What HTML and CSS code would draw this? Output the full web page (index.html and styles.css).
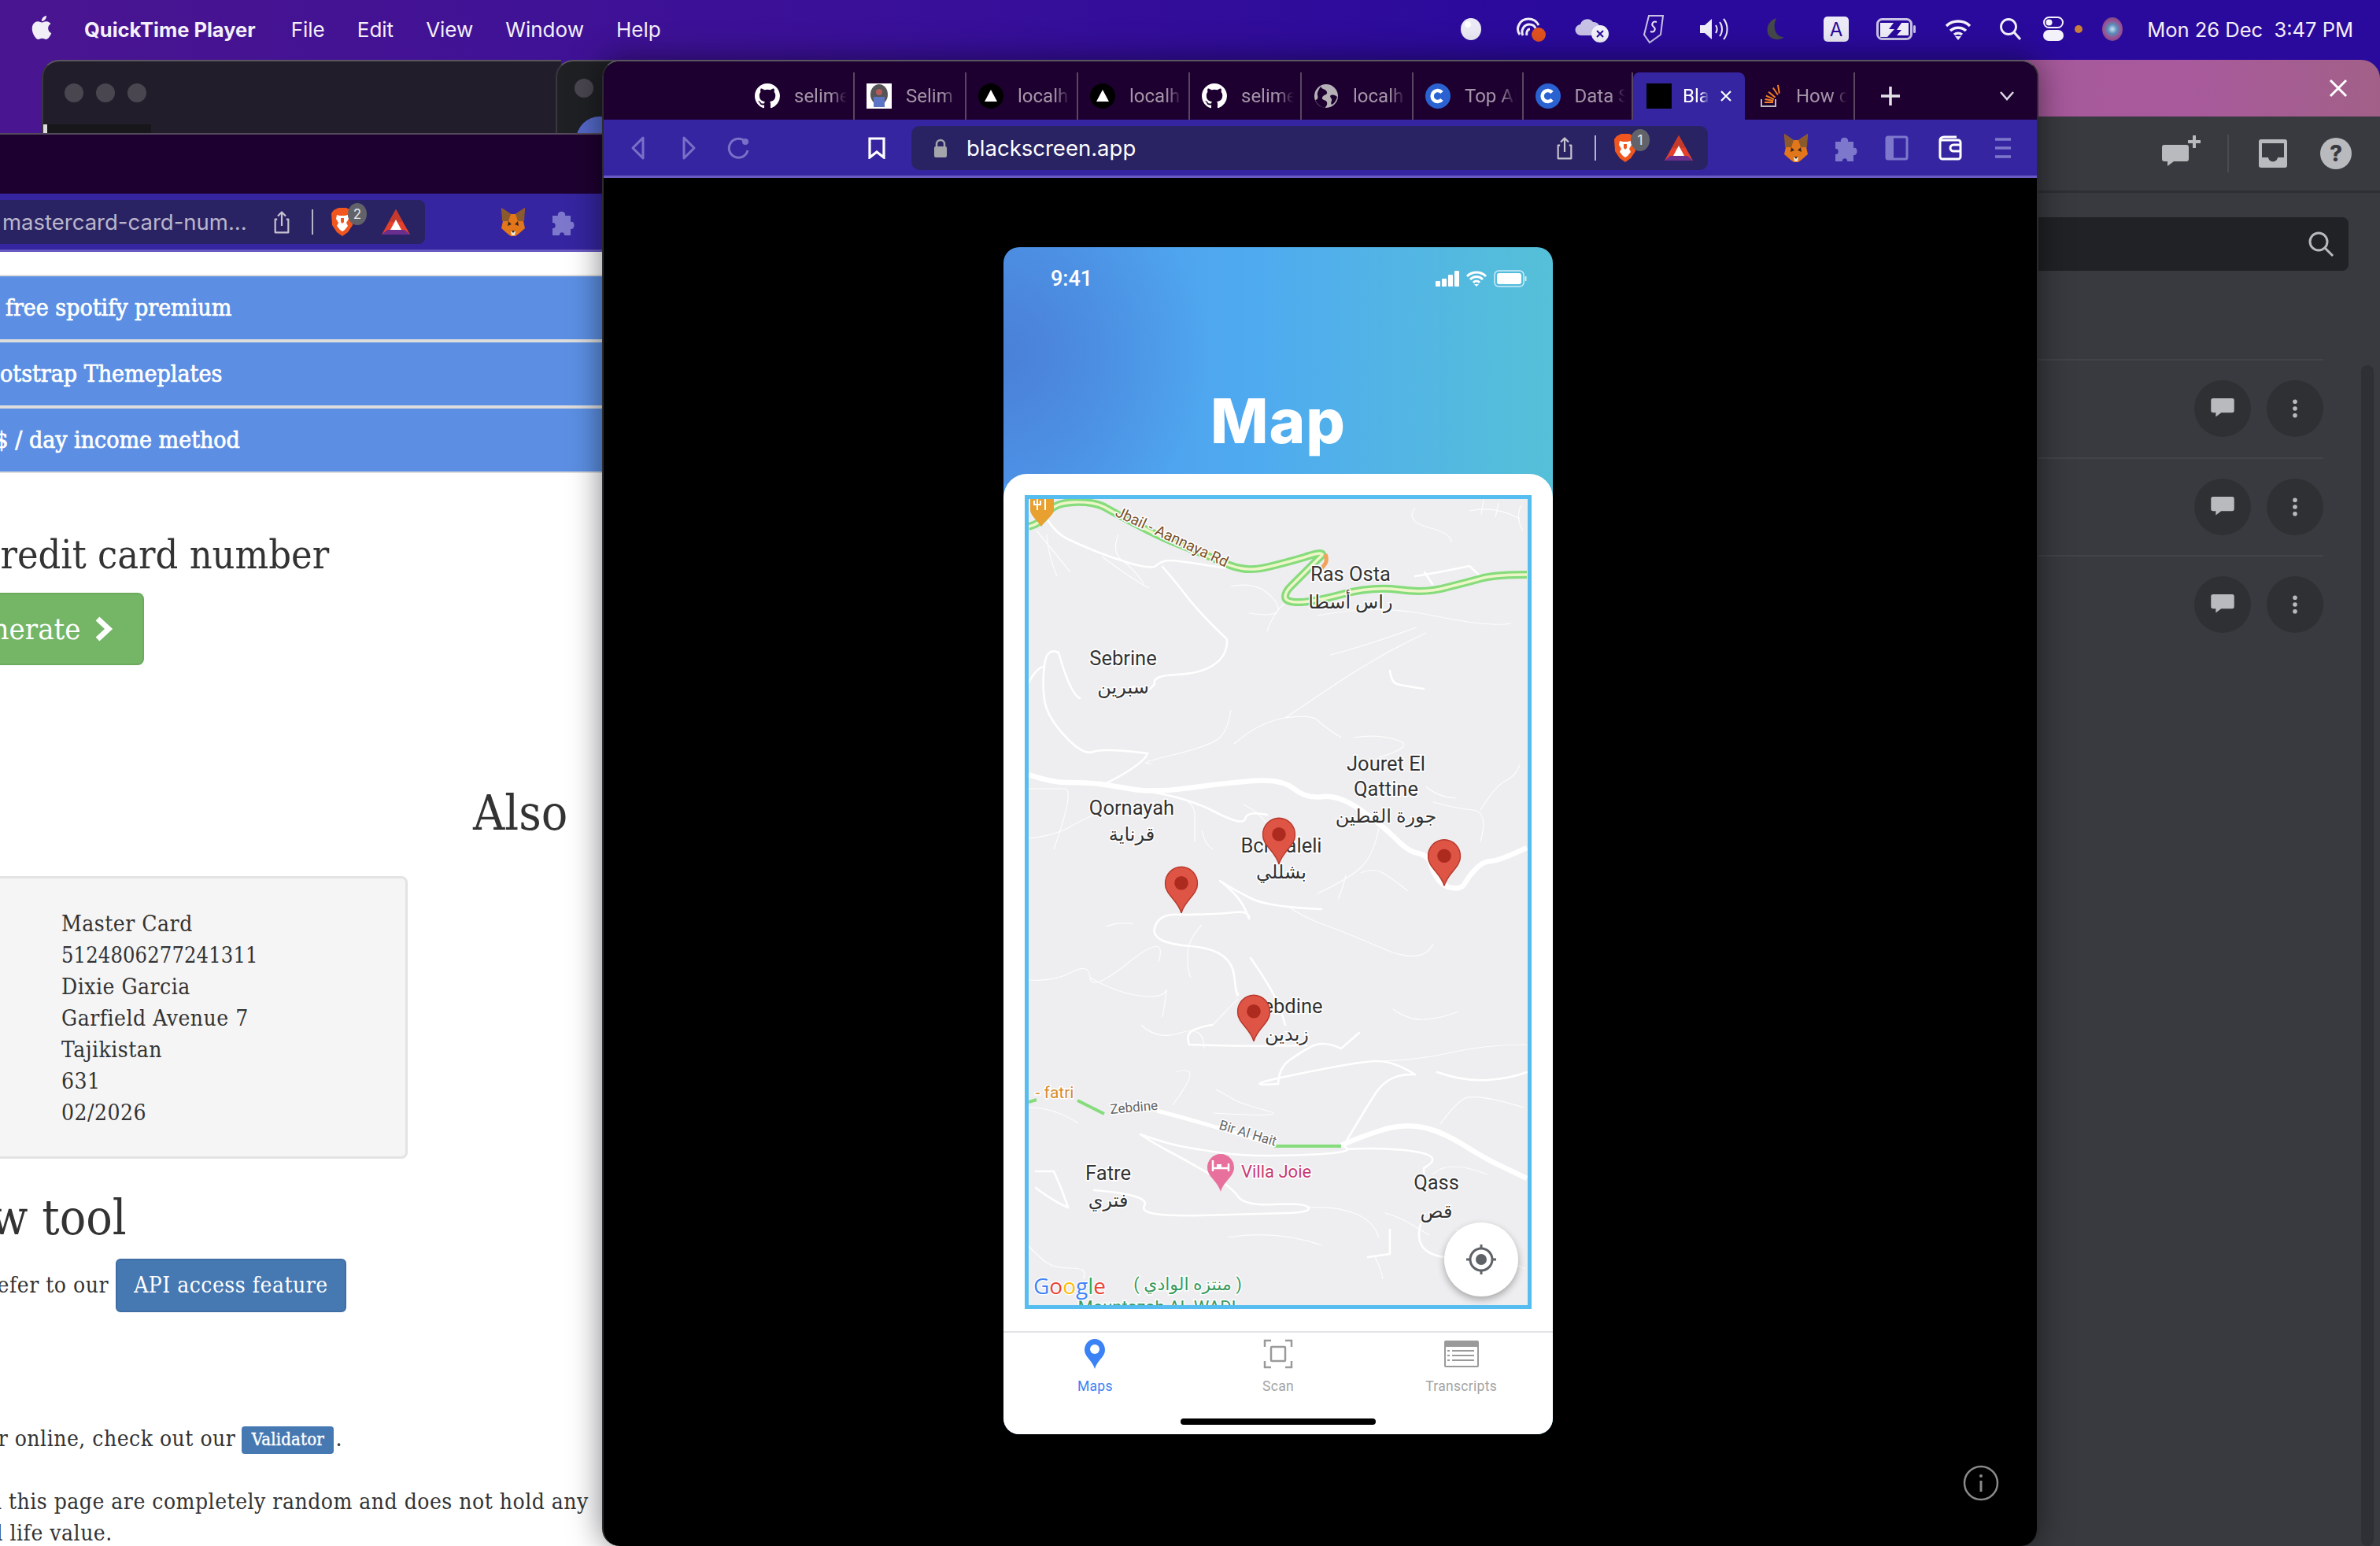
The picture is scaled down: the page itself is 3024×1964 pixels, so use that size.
FILE: index.html
```html
<!DOCTYPE html>
<html lang="en">
<head>
<meta charset="utf-8">
<title>QuickTime Player</title>
<link rel="stylesheet" href="styles.css">
</head>
<body>
<svg class="defs" aria-hidden="true">
  <symbol id="gh" viewBox="0 0 16 16"><path fill="#fff" d="M8 0C3.58 0 0 3.58 0 8c0 3.54 2.29 6.53 5.47 7.59.4.07.55-.17.55-.38 0-.19-.01-.82-.01-1.49-2.01.37-2.53-.49-2.69-.94-.09-.23-.48-.94-.82-1.13-.28-.15-.68-.52-.01-.53.63-.01 1.08.58 1.23.82.72 1.21 1.87.87 2.33.66.07-.52.28-.87.51-1.07-1.78-.2-3.64-.89-3.64-3.95 0-.87.31-1.59.82-2.15-.08-.2-.36-1.02.08-2.12 0 0 .67-.21 2.2.82.64-.18 1.32-.27 2-.27s1.36.09 2 .27c1.53-1.04 2.2-.82 2.2-.82.44 1.1.16 1.92.08 2.12.51.56.82 1.27.82 2.15 0 3.07-1.87 3.75-3.65 3.95.29.25.54.73.54 1.48 0 1.07-.01 1.93-.01 2.2 0 .21.15.46.55.38A8.013 8.013 0 0016 8c0-4.42-3.58-8-8-8z"/></symbol>
  <symbol id="vercel" viewBox="0 0 32 32"><circle cx="16" cy="16" r="16" fill="#000"/><path d="M16 8l8 15H8z" fill="#fff"/></symbol>
  <symbol id="coin" viewBox="0 0 32 32"><circle cx="16" cy="16" r="16" fill="#2a62d2"/><path d="M21 11.5a7 7 0 1 0 0 9" fill="none" stroke="#fff" stroke-width="4.5"/></symbol>
  <symbol id="globe" viewBox="0 0 32 32"><circle cx="16" cy="16" r="15" fill="#b5b1b7"/><path d="M9 4c2 4 7 3 8 7s-5 3-6 7 5 2 6 6-2 5-2 7c-3 0-10-3-13-10 3 0 4-3 3-6s2-8 4-11zM22 15c3-1 6 0 8 2-1 4-3 8-7 10-2-3 1-5 0-7s-3-4-1-5z" fill="#1e0030"/></symbol>
  <symbol id="so" viewBox="0 0 32 32"><path d="M5 20v10h20V20h-2v8H7v-8z" fill="#bcbbbb"/><path d="M10 25h11v-2H10zM10.300 21l10.700 2 .4-2-10.700-2zM11.500 16.500l10 4.600.8-1.800-10-4.600zM14.500 11.500l8.400 7 1.300-1.500-8.400-7zM20 6l6.100 9.100 1.600-1.100L21.600 4.900zM26 2l1.800 10.800 2-.3L28 1.700z" fill="#f48024"/></symbol>
  <symbol id="share" viewBox="0 0 24 36"><path d="M5 14H2v20h20V14h-3M12 24V3M6 9l6-6 6 6" fill="none" stroke="currentColor" stroke-width="2.600" stroke-linejoin="round"/></symbol>
  <symbol id="brave" viewBox="0 0 30 36"><path d="M4 3l6-3h10l6 3 3 4-1 15-6 9-7 5-7-5-6-9L1 7z" fill="#f1561f"/><path d="M8 9l4 1h6l4-1 1 5-3 5 2 4-4 5-3 2-3-2-4-5 2-4-3-5z" fill="#fff"/><path d="M13 13h4v5l-2 2-2-2z" fill="#f1561f"/></symbol>
  <symbol id="bat" viewBox="0 0 36 32"><path d="M18 0L0 32h36z" fill="#e5402b"/><path d="M18 0L9 16h18z" fill="#c53a2a"/><path d="M18 13l-7 13h14z" fill="#fff"/><path d="M0 32l7-6h22l7 6z" fill="#6a2e8f"/></symbol>
  <symbol id="fox" viewBox="0 0 32 36"><path d="M1 0l12 8h6L31 0l-2 17 2 9-8 7-4 3h-6l-4-3-8-7 2-9z" fill="#e2761b"/><path d="M1 0l12 8-3 9-8 0zM31 0L19 8l3 9 8 0z" fill="#8a5a2d"/><path d="M10 17l4 4-5 2zM22 17l-4 4 5 2z" fill="#3a2a20"/><path d="M13 30h6l-1 5h-4z" fill="#efe6da"/><path d="M14 29h4l-2 3z" fill="#222"/></symbol>
  <symbol id="puzzle" viewBox="0 0 30 34"><path d="M2 9h7c-2-7 11-7 9 0h7v8c6-2 6 10 0 9v8h-8c1-5-7-5-6 0H2v-9c5 1 5-8 0-7z" fill="currentColor"/></symbol>
  <symbol id="bubble" viewBox="0 0 34 30"><path d="M3 0h28a3 3 0 0 1 3 3v15a3 3 0 0 1-3 3H15l-8 6v-6H3a3 3 0 0 1-3-3V3a3 3 0 0 1 3-3z" fill="#b9babd"/></symbol>
  <symbol id="kebab" viewBox="0 0 10 30"><circle cx="5" cy="4" r="3.500" fill="#b9babd"/><circle cx="5" cy="15" r="3.500" fill="#b9babd"/><circle cx="5" cy="26" r="3.500" fill="#b9babd"/></symbol>
  <symbol id="pin" viewBox="0 0 44 62"><path d="M22 1C10 1 1 11 1 23c0 14 17 22 21 38 4-16 21-24 21-38C43 11 34 1 22 1z" fill="#de5546" stroke="#b8382c" stroke-width="1.500"/><circle cx="22" cy="22" r="9" fill="#ad2a1f"/></symbol>
</svg>

<div class="desktop">
  <header class="menubar">
    <div class="menu-left">
      <svg class="apple" viewBox="0 0 24 24"><path fill="#f2eef8" d="M12.152 6.896c-.948 0-2.415-1.078-3.96-1.04-2.04.027-3.91 1.183-4.961 3.014-2.117 3.675-.546 9.103 1.519 12.09 1.013 1.454 2.208 3.09 3.792 3.039 1.52-.065 2.09-.987 3.935-.987 1.831 0 2.35.987 3.96.948 1.637-.026 2.676-1.48 3.676-2.948 1.156-1.688 1.636-3.325 1.662-3.415-.039-.013-3.182-1.221-3.22-4.857-.026-3.04 2.48-4.494 2.597-4.559-1.429-2.09-3.623-2.324-4.39-2.376-2-.156-3.675 1.09-4.61 1.09zM15.53 3.83c.843-1.012 1.4-2.427 1.245-3.83-1.207.052-2.662.805-3.532 1.818-.78.896-1.454 2.338-1.273 3.714 1.338.104 2.715-.688 3.559-1.701"/></svg>
      <span class="app-name">QuickTime Player</span>
      <span>File</span><span>Edit</span><span>View</span><span>Window</span><span>Help</span>
    </div>
    <div class="menu-right">
      <span class="slot"><svg width="28" height="30" viewBox="0 0 28 30"><ellipse cx="14" cy="15" rx="13" ry="14" fill="#eceaf6"/><circle cx="10" cy="9" r="4" fill="#fff"/></svg></span>
      <span class="slot"><svg width="42" height="34" viewBox="0 0 42 34"><path d="M6 24C0 16 6 4 17 4c7 0 11 4 13 8M10 25c-3-6 1-14 8-14 4 0 7 2 8 5M15 25c-1-4 1-8 4-8" fill="none" stroke="#f0eef8" stroke-width="3"/><circle cx="30" cy="24" r="9" fill="#e2521f"/></svg></span>
      <span class="slot"><svg width="46" height="36" viewBox="0 0 46 36"><path d="M8 26a7 7 0 0 1-1-14 9 9 0 0 1 16-3 8 8 0 0 1 9 8v9z" fill="#c8c2e6"/><circle cx="32" cy="24" r="11" fill="#f4f2fa"/><path d="M28 20l8 8M36 20l-8 8" stroke="#2a0a9c" stroke-width="2"/></svg></span>
      <span class="slot"><svg width="30" height="38" viewBox="0 0 30 38"><path d="M9 2h18l-3 24-14 10-7-10z" fill="none" stroke="#c8c2e6" stroke-width="2"/><path d="M19 10c-6-2-7 4-4 6s2 8-4 6" fill="none" stroke="#e8e4f4" stroke-width="2"/></svg></span>
      <span class="slot"><svg width="38" height="30" viewBox="0 0 38 30"><path d="M1 10h6l9-8v26l-9-8H1z" fill="#f0eef8"/><path d="M21 10c2 3 2 7 0 10M26 6c4 5 4 13 0 18M31 2c6 7 6 19 0 26" fill="none" stroke="#f0eef8" stroke-width="2"/></svg></span>
      <span class="slot"><svg width="26" height="30" viewBox="0 0 26 30"><path d="M14 1C5 4 1 12 3 20s14 11 21 5C14 26 8 14 14 1z" fill="#45494a"/></svg></span>
      <span class="slot"><span class="a-box">A</span></span>
      <span class="slot"><svg width="52" height="28" viewBox="0 0 52 28"><rect x="1.500" y="1.500" width="43" height="25" rx="6" fill="none" stroke="#c8c2e6" stroke-width="3"/><path d="M5 6h17l-6 8h7l-9 10H5z" fill="#f0eef8"/><path d="M32 6h9v16h-15l6-7h-6z" fill="#f0eef8"/><rect x="47" y="9" width="3" height="10" rx="1.500" fill="#c8c2e6"/></svg></span>
      <span class="slot"><svg width="34" height="28" viewBox="0 0 34 28"><path d="M2 10a22 22 0 0 1 30 0M7 16a15 15 0 0 1 20 0M12 21a8 8 0 0 1 10 0" fill="none" stroke="#f4f2fa" stroke-width="3.500"/><path d="M17 28l-4-5h8z" fill="#f4f2fa"/></svg></span>
      <span class="slot slot-s"><svg width="28" height="30" viewBox="0 0 28 30"><circle cx="12" cy="12" r="9.500" fill="none" stroke="#f4f2fa" stroke-width="2.800"/><path d="M19 19l8 9" stroke="#f4f2fa" stroke-width="3.200"/></svg></span>
      <span class="slot slot-m"><svg width="30" height="32" viewBox="0 0 30 32"><rect x="3" y="1" width="24" height="13" rx="6.500" fill="none" stroke="#f4f2fa" stroke-width="2"/><circle cx="9.500" cy="7.500" r="4" fill="#f4f2fa"/><rect x="2" y="17" width="26" height="14" rx="7" fill="#f4f2fa"/></svg></span>
      <span class="dot-orange"></span>
      <span class="siri"></span>
      <span class="clock">Mon 26 Dec&nbsp;&nbsp;3:47 PM</span>
    </div>
  </header>

  <div class="win win-a">
    <div class="lights"><i></i><i></i><i></i></div>
    <div class="win-a-strip"></div>
  </div>
  <div class="win win-b">
    <div class="lights"><i></i></div>
    <div class="win-b-blue"></div>
  </div>

  <section class="win win-tools">
    <div class="tools-title"><svg width="26" height="26" viewBox="0 0 26 26"><path d="M3 3l20 20M23 3L3 23" stroke="#fff" stroke-width="3"/></svg></div>
    <div class="tools-head">
      <svg width="50" height="46" viewBox="0 0 50 46"><use href="#bubble" width="34" height="30" y="12"/><path d="M41 0v16M33 8h16" stroke="#b9babd" stroke-width="4"/></svg>
      <span class="tools-sep"></span>
      <svg width="36" height="36" viewBox="0 0 36 36"><path d="M3 0h30a3 3 0 0 1 3 3v30a3 3 0 0 1-3 3H3a3 3 0 0 1-3-3V3a3 3 0 0 1 3-3zm1 5v18h8c1 7 11 7 12 0h8V5z" fill="#b9babd"/></svg>
      <span class="help">?</span>
    </div>
    <div class="tools-search"><svg width="34" height="34" viewBox="0 0 34 34"><circle cx="14" cy="14" r="11" fill="none" stroke="#b9babd" stroke-width="3"/><path d="M22 22l10 10" stroke="#b9babd" stroke-width="3"/></svg></div>
    <div class="rows">
      <div class="row"><span class="round"><svg width="30" height="26"><use href="#bubble" width="30" height="26"/></svg></span><span class="round"><svg width="8" height="26"><use href="#kebab" width="8" height="26"/></svg></span></div>
      <div class="row"><span class="round"><svg width="30" height="26"><use href="#bubble" width="30" height="26"/></svg></span><span class="round"><svg width="8" height="26"><use href="#kebab" width="8" height="26"/></svg></span></div>
      <div class="row"><span class="round"><svg width="30" height="26"><use href="#bubble" width="30" height="26"/></svg></span><span class="round"><svg width="8" height="26"><use href="#kebab" width="8" height="26"/></svg></span></div>
    </div>
    <div class="scrolltrack"></div>
  </section>

  <section class="win win-site">
    <div class="site-title"></div>
    <div class="toolbar toolbar-site">
      <div class="pill pill-site">
        <span class="url-dim">mastercard-card-num...</span>
        <svg class="ic-share" width="20" height="32"><use href="#share" width="20" height="32"/></svg>
        <span class="pill-sep"></span>
        <span class="brave"><svg width="30" height="36"><use href="#brave" width="30" height="36"/></svg><b class="badge">2</b></span>
        <svg width="36" height="32"><use href="#bat" width="36" height="32"/></svg>
      </div>
      <svg class="ext-first" width="32" height="36"><use href="#fox" width="32" height="36"/></svg>
      <svg class="ext" width="30" height="34"><use href="#puzzle" width="30" height="34"/></svg>
    </div>
    <main class="page">
      <div class="bars">
        <div class="bar"><span class="bar-a">Get free spotify premium</span></div>
        <div class="bar"><span class="bar-b">Bootstrap Themeplates</span></div>
        <div class="bar"><span class="bar-c">100$ / day income method</span></div>
      </div>
      <h2 class="h-credit">Credit card number</h2>
      <button class="gen">Generate <svg width="24" height="32" viewBox="0 0 24 32"><path d="M4 3l14 13L4 29" fill="none" stroke="#fff" stroke-width="7"/></svg></button>
      <h2 class="h-also">Also</h2>
      <div class="card">
        <div>Master Card</div>
        <div class="card-num">5124806277241311</div>
        <div>Dixie Garcia</div>
        <div>Garfield Avenue 7</div>
        <div>Tajikistan</div>
        <div>631</div>
        <div>02/2026</div>
      </div>
      <h2 class="h-tool">New tool</h2>
      <p class="p-api"><span class="clip-refer">refer to our</span><a class="btn-api">API access feature</a></p>
      <p class="p-val"><span class="clip-or">or online, check out our</span><a class="btn-val">Validator</a>.</p>
      <p class="p-note"><span class="clip-on">on this page are completely random and does not hold any</span><br><span class="clip-real">real life value.</span></p>
    </main>
  </section>

  <section class="win win-front">
    <div class="tabstrip">
      <div class="tab"><svg width="32" height="32"><use href="#gh" width="32" height="32"/></svg><span>selime</span></div>
      <div class="tab"><svg width="32" height="32" viewBox="0 0 32 32"><rect width="32" height="32" fill="#fff"/><ellipse cx="16" cy="14" rx="11" ry="13" fill="#555"/><circle cx="16" cy="11" r="4" fill="#b45a5a"/><rect x="9" y="17" width="14" height="13" fill="#5b74c4"/></svg><span>Selim</span></div>
      <div class="tab"><svg width="32" height="32"><use href="#vercel" width="32" height="32"/></svg><span>localh</span></div>
      <div class="tab"><svg width="32" height="32"><use href="#vercel" width="32" height="32"/></svg><span>localh</span></div>
      <div class="tab"><svg width="32" height="32"><use href="#gh" width="32" height="32"/></svg><span>selime</span></div>
      <div class="tab"><svg width="32" height="32"><use href="#globe" width="32" height="32"/></svg><span>localh</span></div>
      <div class="tab tab-n"><svg width="32" height="32"><use href="#coin" width="32" height="32"/></svg><span>Top AI</span></div>
      <div class="tab tab-n"><svg width="32" height="32"><use href="#coin" width="32" height="32"/></svg><span>Data S</span></div>
      <div class="tab tab-active"><i class="fav-black"></i><span>Bla</span><svg width="16" height="16" viewBox="0 0 16 16"><path d="M2 2l12 12M14 2L2 14" stroke="#fff" stroke-width="2.200"/></svg></div>
      <div class="tab tab-n"><svg width="32" height="32"><use href="#so" width="32" height="32"/></svg><span>How d</span></div>
      <svg class="plus" width="24" height="24" viewBox="0 0 24 24"><path d="M12 0v24M0 12h24" stroke="#e5e2ea" stroke-width="3.500"/></svg>
      <svg class="chev" width="18" height="12" viewBox="0 0 18 12"><path d="M1 1l8 9 8-9" fill="none" stroke="#dcd8e6" stroke-width="2.500"/></svg>
    </div>
    <div class="toolbar toolbar-front">
      <svg class="nav" width="32" height="32" viewBox="0 0 32 32"><path d="M22 3L9 16l13 13z" fill="none" stroke="#7a70c8" stroke-width="3" stroke-linejoin="round"/></svg>
      <svg class="nav" width="32" height="32" viewBox="0 0 32 32"><path d="M10 3l13 13-13 13z" fill="none" stroke="#7a70c8" stroke-width="3" stroke-linejoin="round"/></svg>
      <svg class="nav" width="32" height="32" viewBox="0 0 32 32"><path d="M24 8a12 12 0 1 0 3 11" fill="none" stroke="#7a70c8" stroke-width="3"/><circle cx="24" cy="8" r="4" fill="#7a70c8"/></svg>
      <svg class="bookmark" width="22" height="28" viewBox="0 0 22 28"><path d="M2 2h18v24l-9-7-9 7z" fill="none" stroke="#fff" stroke-width="3.200"/></svg>
      <div class="pill pill-front">
        <svg class="lock" width="18" height="24" viewBox="0 0 18 24"><path d="M4 11V7a5 5 0 0 1 10 0v4" fill="none" stroke="#a4a4ac" stroke-width="2.500"/><rect x="1" y="10" width="16" height="14" rx="2" fill="#a4a4ac"/></svg>
        <span class="url">blackscreen.app</span>
        <svg class="ic-share" width="20" height="32"><use href="#share" width="20" height="32"/></svg>
        <span class="pill-sep"></span>
        <span class="brave"><svg width="30" height="36"><use href="#brave" width="30" height="36"/></svg><b class="badge">1</b></span>
        <svg width="36" height="32"><use href="#bat" width="36" height="32"/></svg>
      </div>
      <svg class="ext-first" width="32" height="36"><use href="#fox" width="32" height="36"/></svg>
      <svg class="ext" width="30" height="34"><use href="#puzzle" width="30" height="34"/></svg>
      <svg class="ext ext-side" width="30" height="32" viewBox="0 0 30 32"><rect x="2" y="2" width="26" height="28" rx="2" fill="none" stroke="#7d78cc" stroke-width="3"/><rect x="2" y="2" width="9" height="28" fill="#7d78cc"/></svg>
      <svg class="ext ext-wallet" width="32" height="32" viewBox="0 0 32 32"><path d="M4 6h22a3 3 0 0 1 3 3v18a3 3 0 0 1-3 3H6a3 3 0 0 1-3-3V6c0-2 2-4 5-4h16" fill="none" stroke="#fff" stroke-width="3"/><path d="M29 12H20a4 4 0 0 0 0 8h9" fill="none" stroke="#fff" stroke-width="3"/></svg>
      <svg class="ext ext-menu" width="24" height="28" viewBox="0 0 24 28"><path d="M2 3h20M2 14h20M2 25h20" stroke="#7d78cc" stroke-width="3.500"/></svg>
    </div>
    <div class="viewport">
      <div class="phone">
        <div class="status">
          <span>9:41</span>
          <svg width="116" height="22" viewBox="0 0 116 22"><rect x="0" y="14" width="6" height="7" rx="1" fill="#fff"/><rect x="8" y="11" width="6" height="10" rx="1" fill="#fff"/><rect x="16" y="6" width="6" height="15" rx="1" fill="#fff"/><rect x="24" y="1" width="6" height="20" rx="1" fill="#fff"/><path d="M40 8a17 17 0 0 1 24 0M44 12a11 11 0 0 1 16 0M48 16a5 5 0 0 1 8 0" fill="none" stroke="#fff" stroke-width="3"/><path d="M52 21l-3-3h6z" fill="#fff"/><rect x="75" y="1" width="37" height="20" rx="5" fill="none" stroke="#cfeafa" stroke-width="1.500"/><rect x="78" y="4" width="31" height="14" rx="3" fill="#fff"/><rect x="113.500" y="8" width="2" height="6" fill="#cfeafa"/></svg>
        </div>
        <h1 class="phone-title">Map</h1>
        <div class="panel">
          <div class="map">
            <svg class="map-svg" viewBox="1307 632 634 1024" width="634" height="1024">
              <rect x="1307" y="632" width="634" height="1024" fill="#eeeef0"/>
              <g class="rd-thin">
                <path d="M1798 643Q1785 660 1815 668T1844 687"/>
                <path d="M1867 647Q1900 640 1931 657M1885 633L1882 652M1904 637L1900 655M1933 640Q1925 655 1935 672"/>
                <path d="M1330 677Q1332 705 1343 730M1317 672Q1340 700 1360 725"/>
                <path d="M1421 677Q1412 700 1426 710T1454 740M1400 705Q1440 735 1460 745"/>
                <path d="M1564 743Q1600 735 1619 760T1587 777M1640 760Q1620 770 1610 800"/>
                <path d="M1674 780Q1750 765 1821 780T1920 790M1800 795Q1730 820 1690 830"/>
                <path d="M1564 900Q1560 925 1550 935T1490 957T1463 968"/>
                <path d="M1568 943Q1600 915 1633 910T1674 913T1704 935"/>
                <path d="M1633 910Q1670 885 1697 867T1752 833T1812 802"/>
                <path d="M1720 935Q1750 930 1775 938T1752 960"/>
                <path d="M1821 1017Q1850 1025 1871 1027T1881 1067M1812 997Q1825 1010 1850 1012"/>
                <path d="M1931 970Q1925 985 1913 990T1881 1027"/>
                <path d="M1307 1063Q1340 1060 1362 1047T1426 1020M1307 1000Q1340 1000 1353 1000T1339 1077"/>
                <path d="M1504 1013Q1518 1020 1518 1033T1518 1067M1527 1053Q1530 1070 1541 1077M1580 1020Q1600 1030 1610 1045"/>
                <path d="M1752 1050Q1745 1085 1729 1100T1674 1133M1729 1107Q1745 1100 1757 1107T1789 1130M1710 1110Q1705 1130 1700 1140"/>
                <path d="M1637 1150Q1660 1165 1683 1173T1757 1203T1821 1197"/>
                <path d="M1307 1243Q1340 1245 1362 1233T1385 1240T1435 1220T1472 1220"/>
                <path d="M1385 1240Q1420 1260 1449 1263T1481 1257T1477 1290"/>
                <path d="M1527 1173Q1510 1190 1509 1210T1513 1240M1405 1175Q1425 1168 1440 1172"/>
                <path d="M1573 1267Q1555 1285 1541 1300M1770 1280Q1790 1295 1812 1293T1853 1283"/>
                <path d="M1495 1360Q1505 1355 1511 1360T1490 1402M1545 1382Q1560 1390 1568 1395T1610 1409T1541 1412"/>
                <path d="M1752 1346Q1800 1345 1844 1335T1940 1325M1830 1426Q1845 1405 1858 1395T1936 1405"/>
                <path d="M1760 1539Q1780 1545 1793 1553T1816 1567M1747 1595Q1755 1610 1757 1623M1665 1532Q1695 1530 1720 1539T1752 1570"/>
                <path d="M1307 1581Q1320 1595 1330 1602T1362 1609T1376 1623M1307 1405Q1340 1405 1370 1425M1850 1560Q1890 1590 1938 1610"/>
                <path d="M1450 1300Q1470 1320 1500 1310T1530 1330M1560 1570Q1620 1560 1680 1580M1820 1490Q1840 1470 1890 1490"/>
              </g>
              <g class="rd-mid">
                <path d="M1330 657Q1342 676 1357 683T1389 697T1431 712T1467 718Q1476 710 1486 710T1527 715T1564 720"/>
                <path d="M1477 718Q1492 735 1509 757T1559 810Q1560 830 1543 842T1495 855T1467 867"/>
                <path d="M1467 867Q1450 888 1440 870M1372 885Q1360 880 1345 827Q1330 820 1327 843T1327 887T1353 933T1389 953T1458 955Q1455 965 1426 982T1399 992"/>
                <path d="M1307 865Q1318 845 1327 845"/>
                <path d="M1467 1005Q1510 1012 1545 1030T1582 1038T1610 1033"/>
                <path d="M1499 1160Q1472 1158 1467 1177T1513 1200T1568 1237T1573 1260"/>
                <path d="M1499 1160Q1540 1160 1568 1157Q1588 1155 1587 1165Q1580 1145 1568 1133T1550 1117Q1570 1130 1591 1140T1679 1153"/>
                <path d="M1766 850Q1768 865 1775 867T1809 873"/>
                <path d="M1589 1215Q1610 1245 1619 1263T1633 1300"/>
                <path d="M1798 730Q1830 725 1867 717L1881 730M1810 725L1820 740"/>
                <path d="M1449 1439Q1480 1450 1500 1454T1555 1463T1660 1465T1706 1454"/>
                <path d="M1449 1439Q1465 1450 1486 1461T1536 1489T1573 1518T1619 1528T1663 1532Q1665 1538 1637 1539T1527 1542T1454 1530T1390 1510"/>
                <path d="M1711 1458Q1760 1455 1798 1461T1809 1482V1500"/>
                <path d="M1711 1447Q1730 1415 1747 1388T1798 1363Q1770 1345 1747 1346T1646 1363T1624 1375Q1625 1355 1637 1346T1665 1328T1704 1330L1727 1310"/>
                <path d="M1511 1325Q1505 1310 1520 1305T1541 1300M1511 1325Q1590 1328 1660 1326M1826 1360Q1860 1372 1890 1370T1940 1360"/>
                <path d="M1316 1486H1339Q1350 1510 1357 1532Q1340 1525 1316 1507M1805 1553Q1800 1570 1807 1581T1835 1595M1766 1560V1591L1738 1595"/>
              </g>
              <g class="rd-thick">
                <path d="M1307 982Q1339 993 1359 992Q1380 992 1398 994Q1417 997 1442 1001Q1467 1005 1511 999Q1555 993 1591 990Q1628 987 1644 1000Q1660 1013 1681 1010Q1702 1008 1729 1027Q1757 1047 1773 1063Q1789 1080 1802 1082Q1816 1085 1818 1096Q1821 1107 1828 1116Q1835 1125 1846 1126Q1858 1128 1862 1119Q1867 1110 1876 1101Q1885 1092 1894 1092Q1904 1092 1940 1075"/>
                <path class="rd-thick-s" d="M1470 1409Q1550 1430 1623 1454"/>
                <path d="M1704 1453Q1734 1440 1761 1432Q1789 1425 1812 1431Q1835 1437 1862 1454Q1890 1472 1915 1483L1940 1495"/>
              </g>
              <path class="rd-green" d="M1307 667Q1323 663 1331 650Q1339 637 1364 636Q1389 635 1403 642Q1417 650 1442 663Q1467 677 1492 687Q1518 697 1541 707Q1564 718 1577 720Q1591 723 1612 718Q1633 713 1657 706Q1681 698 1680 703L1640 743Q1633 750 1633 756Q1633 763 1650 763Q1667 763 1705 753Q1743 743 1777 747Q1812 752 1839 744Q1867 737 1885 732Q1904 728 1940 728"/>
              <path class="rd-green-in" d="M1307 667Q1323 663 1331 650Q1339 637 1364 636Q1389 635 1403 642Q1417 650 1442 663Q1467 677 1492 687Q1518 697 1541 707Q1564 718 1577 720Q1591 723 1612 718Q1633 713 1657 706Q1681 698 1680 703L1640 743Q1633 750 1633 756Q1633 763 1650 763Q1667 763 1705 753Q1743 743 1777 747Q1812 752 1839 744Q1867 737 1885 732Q1904 728 1940 728"/>
              <path class="rd-orange" d="M1684 702c3 8 1 12-5 18"/>
              <path class="rd-green-2" d="M1307 1398l10-3M1369 1396l34 17M1619 1454h85"/>
              <path d="M1309 632h30v14c0 6-10 12-16 21-6-9-14-15-14-21z" fill="#e8a030"/>
              <path d="M1318 632v14M1328 632v14M1314 634v5h8v-5" stroke="#fff" stroke-width="2" fill="none"/>

              <g class="labels">
              <text class="lbl road-brown" transform="translate(1416 656) rotate(25)">Jbail - Aannaya Rd</text>
              <text class="lbl" x="1716" y="739">Ras Osta</text>
              <text class="lbl ar" x="1716" y="774">راس أسطا</text>
              <text class="lbl" x="1427" y="846">Sebrine</text>
              <text class="lbl ar" x="1427" y="882">سبرين</text>
              <text class="lbl" x="1761" y="980">Jouret El</text>
              <text class="lbl" x="1761" y="1012">Qattine</text>
              <text class="lbl ar" x="1761" y="1046">جورة القطين</text>
              <text class="lbl" x="1438" y="1036">Qornayah</text>
              <text class="lbl ar" x="1438" y="1069">قرناية</text>
              <text class="lbl" x="1628" y="1084">Bchaaleli</text>
              <text class="lbl ar" x="1628" y="1117">بشللي</text>
              <text class="lbl" x="1635" y="1288">Zebdine</text>
              <text class="lbl ar" x="1635" y="1323">زبدين</text>
              <text class="lbl" x="1408" y="1500">Fatre</text>
              <text class="lbl ar" x="1408" y="1534">فتري</text>
              <text class="lbl" x="1825" y="1512">Qass</text>
              <text class="lbl ar" x="1825" y="1548">قص</text>
              <text class="lbl road-orange" x="1340" y="1396">- fatri</text>
              <text class="lbl road-gray" transform="translate(1411 1416) rotate(-5)">Zebdine</text>
              <text class="lbl road-gray" transform="translate(1548 1435) rotate(17)">Bir Al Hait</text>
              <text class="lbl poi" x="1577" y="1497">Villa Joie</text>
              <text class="lbl green-lbl" x="1509" y="1640">( منتزه الوادي )</text>
              <text class="lbl green-lbl" x="1470" y="1669">Mountazah AL WADI</text>
              </g>
              <text class="google" x="1313" y="1642"><tspan fill="#4285f4">G</tspan><tspan fill="#ea4335">o</tspan><tspan fill="#fbbc05">o</tspan><tspan fill="#4285f4">g</tspan><tspan fill="#34a853">l</tspan><tspan fill="#ea4335">e</tspan></text>

              <path d="M1551 1464c-10 0-17 8-17 17 0 12 13 17 17 31 4-14 17-19 17-31 0-9-7-17-17-17z" fill="#e8709c"/>
              <path d="M1541 1472v14M1541 1482h20v4M1561 1476v10" stroke="#fff" stroke-width="2.500" fill="none"/><rect x="1546" y="1477" width="6" height="5" fill="#fff"/>
              <use href="#pin" x="1603.500" y="1036" width="43" height="61"/>
              <use href="#pin" x="1479.500" y="1097" width="43" height="63"/>
              <use href="#pin" x="1813.500" y="1063" width="43" height="62"/>
              <use href="#pin" x="1571.500" y="1260" width="43" height="63"/>
            </svg>
            <div class="locate"><svg width="42" height="42" viewBox="0 0 42 42"><circle cx="21" cy="21" r="14" fill="none" stroke="#5f6368" stroke-width="3"/><circle cx="21" cy="21" r="7" fill="#5f6368"/><path d="M21 2v6M21 34v6M2 21h6M34 21h6" stroke="#5f6368" stroke-width="3"/></svg></div>
          </div>
          <nav class="phone-tabs">
            <div class="ptab ptab-on"><svg width="26" height="38" viewBox="0 0 26 38"><path d="M13 0C6 0 0 6 0 14c0 9 10 13 13 24 3-11 13-15 13-24C26 6 20 0 13 0z" fill="#3b82f6"/><circle cx="13" cy="13" r="6" fill="#fff"/></svg><span>Maps</span></div>
            <div class="ptab"><svg width="38" height="38" viewBox="0 0 38 38"><path d="M10 2H2v8M28 2h8v8M2 28v8h8M36 28v8h-8" fill="none" stroke="#9a9a9a" stroke-width="2.500"/><rect x="10" y="10" width="18" height="18" rx="1" fill="none" stroke="#9a9a9a" stroke-width="2.500"/></svg><span>Scan</span></div>
            <div class="ptab"><svg width="44" height="34" viewBox="0 0 44 34"><rect width="44" height="34" rx="2" fill="#9a9a9a"/><rect x="2" y="8" width="40" height="24" fill="#fff"/><path d="M10 13h28M10 19h28M10 25h28M4 13h3M4 19h3M4 25h3" stroke="#9a9a9a" stroke-width="2.200"/></svg><span>Transcripts</span></div>
          </nav>
          <div class="homebar"></div>
        </div>
      </div>
      <svg class="info" width="46" height="46" viewBox="0 0 46 46"><circle cx="23" cy="23" r="21" fill="none" stroke="#8a8a8a" stroke-width="2.500"/><rect x="21.500" y="20" width="3" height="14" fill="#8a8a8a"/><circle cx="23" cy="14" r="2" fill="#8a8a8a"/></svg>
    </div>
  </section>
</div>
</body>
</html>
```
FILE: styles.css
```css
* { box-sizing: border-box; }
html, body { margin: 0; padding: 0; width: 3024px; height: 1964px; overflow: hidden; background: #2a0a9c; }
.defs { position: absolute; width: 0; height: 0; }
.desktop { position: relative; width: 3024px; height: 1964px; overflow: hidden; background: linear-gradient(90deg, #4a1590 0, #3a1098 35%, #2a0a9c 65%); font-family: Inter, Roboto, "DejaVu Sans", sans-serif; }

.menubar { height: 74px; display: flex; align-items: center; justify-content: space-between; color: #f4f0fa; font-size: 26px; }
.menu-left { display: flex; align-items: center; gap: 41px; padding-left: 38px; }
.apple { width: 30px; height: 32px; margin-right: -26px; margin-top: -4px; }
.app-name { font-weight: 700; margin-left: 24px; margin-right: 4px; font-size: 25.500px; }
.menu-right { display: flex; align-items: center; padding-right: 34px; }
.slot { width: 77.300px; display: flex; align-items: center; justify-content: center; }
.slot-s { width: 55px; margin-left: 0; }
.slot-m { width: 56px; }
.a-box { width: 32px; height: 32px; background: #eceaf6; color: #2a0a9c; border-radius: 5px; display: flex; align-items: center; justify-content: center; font-size: 24px; }
.dot-orange { width: 10px; height: 10px; border-radius: 50%; background: #c97f3a; margin-left: -1px; }
.siri { width: 26px; height: 30px; border-radius: 50%; margin: 0 31px 0 25px; background: radial-gradient(circle at 50% 50%, #c8e4f4 0, #5a8cb8 30%, #a04a90 60%, #2a5a70 100%); }
.clock { font-size: 25.500px; }

.win { position: absolute; overflow: hidden; }
.lights { display: flex; gap: 16px; }
.lights i { width: 24px; height: 24px; border-radius: 50%; background: #4a4650; }

.win-a { left: 53px; top: 76px; width: 660px; height: 94px; background: #221d2b; border-radius: 22px 0 0 0; border-top: 2px solid #5a5660; border-left: 2px solid #3a3640; padding: 28px 0 0 27px; }
.win-a-strip { position: absolute; left: 0; bottom: 0; width: 137px; height: 12px; background: #17161b; border-left: 5px solid #ddd; }
.win-b { left: 706px; top: 76px; width: 100px; height: 94px; background: #1f2024; border-radius: 22px 0 0 0; border-top: 2px solid #5a5660; border-left: 2px solid #3a3640; padding: 22px 0 0 22px; }
.win-b-blue { position: absolute; left: 24px; top: 70px; width: 60px; height: 60px; border-radius: 50%; background: #5468c8; }

.win-tools { left: 2480px; top: 76px; width: 544px; height: 1888px; background: #393a3f; border-radius: 0 24px 0 0; }
.tools-title { height: 72px; background: linear-gradient(90deg, #a4589a, #a85a9c 55%, #a26088); display: flex; align-items: center; justify-content: flex-end; padding-right: 40px; }
.tools-head { height: 97px; border-bottom: 3px solid #2e2f33; display: flex; align-items: center; justify-content: flex-end; padding-right: 36px; }
.tools-sep { width: 2px; height: 48px; background: #4a4b50; margin: 0 38px 0 33px; }
.help { width: 40px; height: 40px; border-radius: 50%; background: #b9babd; color: #393a3f; font-weight: 800; font-size: 28px; margin-left: 42px; display: flex; align-items: center; justify-content: center; }
.tools-search { height: 68px; margin: 31px 40px 0 0; background: #202225; border-radius: 8px; display: flex; align-items: center; justify-content: flex-end; padding-right: 18px; }
.rows { width: 472px; margin-top: 112px; }
.row { height: 124.500px; border-top: 2px solid #43444a; display: flex; align-items: center; justify-content: flex-end; gap: 20px; }
.round { width: 72px; height: 72px; border-radius: 50%; background: #2f3034; display: flex; align-items: center; justify-content: center; }
.scrolltrack { position: absolute; left: 520px; top: 388px; width: 16px; bottom: 0; border-radius: 8px; background: #2f3035; }

.win-site { left: 0; top: 169px; width: 790px; height: 1795px; background: #fff; border-top: 2px solid #544a5c; }
.site-title { height: 75px; background: #1e0030; }
.toolbar { display: flex; align-items: center; background: #3525a0; border-bottom: 3px solid #6a5bc2; }
.toolbar-site { height: 74px; }
.pill { display: flex; align-items: center; height: 56px; background: #2a2363; border-radius: 8px; flex: none; }
.pill svg { flex: none; }
.pill-site { width: 540px; border-radius: 0 8px 8px 0; padding: 0 19px 0 3px; }
.url-dim { color: #bab6cc; font-size: 27.500px; white-space: nowrap; width: 345px; flex: none; }
.ic-share { color: #c6c4cf; }
.pill-sep { width: 2px; height: 32px; background: #b7b4c8; margin: 0 22px 0 28px; flex: none; }
.brave { position: relative; width: 65px; display: flex; flex: none; }
.badge { position: absolute; left: 22px; top: -6px; width: 24px; height: 28px; border-radius: 50%; background: #62636a; color: #e8e8ea; font-weight: 400; font-size: 17px; display: flex; align-items: center; justify-content: center; }
.ext-first { margin-left: 96px; }
.ext { margin-left: 32px; color: #7d78cc; }
.ext-side { margin-left: 35px; }
.ext-wallet { margin-left: 37px; }
.ext-menu { margin-left: 39px; }
.page { color: #333; font-family: "DejaVu Serif Condensed", "DejaVu Serif", serif; font-stretch: condensed; font-size: 28px; letter-spacing: .5px; padding-top: 29px; }
.bars { background: #ddd; padding: 2px 0; display: flex; flex-direction: column; gap: 4px; }
.bar { height: 80px; padding-bottom: 2px; background: #5c8fe3; color: #fff; font-size: 30px; letter-spacing: 0; -webkit-text-stroke: .7px #fff; display: flex; align-items: center; white-space: nowrap; }
.bar-a { margin-left: -50px; }
.bar-b { margin-left: -36px; }
.bar-c { margin-left: -58px; }
h2 { margin: 0; font-weight: 400; white-space: nowrap; }
.h-credit { font-size: 50px; letter-spacing: 0; line-height: 60px; margin: 74px 0 0 -34px; }
.gen { display: flex; align-items: center; gap: 18px; height: 92px; width: 263px; margin: 18px 0 0 -80px; padding: 0 0 0 20px; background: #74b566; border: 2px solid #6cab5e; border-radius: 8px; color: #fff; font: inherit; font-size: 38px; }
.h-also { font-size: 62px; letter-spacing: 0; line-height: 70px; margin: 153px 0 0 601px; }
.card { width: 528px; height: 359px; margin: 45px 0 0 -10px; padding: 38px 0 0 85px; background: #f5f5f5; border: 3px solid #e3e3e3; border-radius: 8px; line-height: 40px; }
.card-num { font-size: 27px; letter-spacing: .15px; }
.h-tool { font-size: 62px; letter-spacing: 0; line-height: 70px; margin: 40px 0 0 -94px; }
p { margin: 0; white-space: nowrap; line-height: 40px; }
.p-api { display: flex; align-items: center; height: 68px; margin-top: 17px; }
.clip-refer { margin-left: -16px; }
.btn-api { display: flex; align-items: center; justify-content: center; width: 293px; height: 68px; margin-left: 9px; background: #4678b2; border: 2px solid #3f6ea4; border-radius: 6px; color: #fff; }
.p-val { display: flex; align-items: center; margin-top: 141px; }
.clip-or { margin-left: -18px; }
.btn-val { display: flex; align-items: center; justify-content: center; width: 117px; height: 35px; margin: 2px 2px 0 8px; background: #4678b2; border-radius: 4px; color: #fff; font-size: 22px; letter-spacing: .2px; -webkit-text-stroke: .4px #fff; }
.p-note { margin-top: 40px; }
.clip-on { margin-left: -30px; }
.clip-real { margin-left: -48px; display: inline-block; }

.win-front { left: 765px; top: 76px; width: 1825px; height: 1888px; background: #000; border-radius: 22px; border-top: 2px solid #5a5660; border-left: 2px solid #2b2b30; border-right: 2px solid #2b2b30; box-shadow: 0 0 40px rgba(0,0,0,.5); overflow: visible; }
.tabstrip { height: 74px; background: #1e0030; border-radius: 20px 20px 0 0; display: flex; align-items: stretch; padding-left: 177px; }
.tab { width: 142px; flex: none; display: flex; align-items: center; gap: 18px; padding: 0 8px 0 15px; position: relative; color: #a496a8; font-size: 24px; font-family: Roboto, sans-serif; margin-top: 14px; border-right: 2px solid #58475f; }
.tab-n { width: 139.500px; }
.tab span { flex: 1; overflow: hidden; white-space: nowrap; -webkit-mask-image: linear-gradient(90deg, #000 70%, transparent); mask-image: linear-gradient(90deg, #000 70%, transparent); }
.tab svg, .fav-black { flex: none; }
.tab-active { background: #3525a0; border-right: 0; border-radius: 8px 8px 0 0; color: #fff; margin-top: 14px; padding: 0 16px 0 17px; gap: 14px; }
.fav-black { width: 32px; height: 32px; background: #000; }
.plus { align-self: center; margin: 14px 0 0 33px; }
.chev { align-self: center; margin: 14px 0 0 127px; }
.toolbar-front { height: 74px; padding-left: 28px; }
.nav { margin-right: 32px; }
.bookmark { margin-left: 116px; }
.pill-front { width: 1012px; margin-left: 33px; padding: 0 19px 0 28px; border-radius: 10px; }
.lock { flex: none; }
.url { color: #fff; font-size: 27.500px; flex: 1; margin-left: 24px; }
.viewport { position: relative; height: 1738px; padding: 88px 0 0 508px; border-radius: 0 0 20px 20px; overflow: hidden; }
.phone { width: 698px; height: 1508px; border-radius: 20px; overflow: hidden; display: flex; flex-direction: column; background: radial-gradient(circle at 0 45%, #4a80d8 0, rgba(74,128,216,0) 260px) no-repeat, linear-gradient(90deg, #4e9aec 0, #4faaf0 45%, #55c0d8 100%); background-size: 100% 300px, 100% 100%; }
.status { display: flex; justify-content: space-between; align-items: center; padding: 24px 33px 0 60px; color: #fff; font-size: 27px; font-weight: 500; font-family: Roboto, sans-serif; }
.phone-title { margin: 120px 0 0; text-align: center; color: #fff; font-weight: 800; font-size: 78px; line-height: 90px; letter-spacing: 1px; height: 90px; }
.panel { margin-top: 22px; flex: 1; background: #fff; border-radius: 30px 30px 0 0; padding-top: 27px; display: flex; flex-direction: column; align-items: center; }
.map { position: relative; width: 644px; height: 1034px; border: 5px solid #55bdf0; overflow: hidden; flex: none; }
.map-svg { display: block; font-family: Roboto, "DejaVu Sans", sans-serif; }
.rd-thin path { fill: none; stroke: #fff; stroke-width: 1.200; opacity: .85; stroke-linejoin: round; }
.rd-mid path { fill: none; stroke: #fff; stroke-width: 2.600; stroke-linejoin: round; stroke-linecap: round; }
.rd-thick path { fill: none; stroke: #fff; stroke-width: 6.500; stroke-linejoin: round; }
.rd-thick .rd-thick-s { stroke-width: 5px; }
.rd-green { fill: none; stroke: #86dc7c; stroke-width: 10; stroke-linejoin: round; }
.rd-green-in { fill: none; stroke: #eef6c8; stroke-width: 3.500; stroke-linejoin: round; }
.rd-green-2 { fill: none; stroke: #86dc7c; stroke-width: 4; }
.rd-orange { fill: none; stroke: #f2a25a; stroke-width: 5; }
.labels { transform: translateY(-3px); }
.lbl { font-size: 25.500px; fill: #333; text-anchor: middle; paint-order: stroke; stroke: #fff; stroke-width: 3px; }
.ar { font-size: 24px; }
.road-brown { fill: #7a5028; font-size: 19px; text-anchor: start; }
.road-orange { fill: #d68a2c; font-size: 21px; }
.road-gray { fill: #666; font-size: 17px; text-anchor: start; }
.poi { fill: #c83a72; font-size: 22px; text-anchor: start; }
.green-lbl { fill: #3a9a5c; font-size: 22px; }
.google { font-family: "Open Sans", sans-serif; font-size: 28px; paint-order: stroke; stroke: #fff; stroke-width: 2.500px; }
.locate { position: absolute; right: 12px; bottom: 11px; width: 94px; height: 94px; border-radius: 50%; background: #fff; box-shadow: 0 4px 10px rgba(0,0,0,.3); display: flex; align-items: center; justify-content: center; }
.phone-tabs { width: 100%; margin-top: 28px; height: 111px; border-top: 2px solid #e4e4e6; display: grid; grid-template-columns: repeat(3, 1fr); }
.ptab { display: flex; flex-direction: column; align-items: center; padding-top: 7px; height: 88px; justify-content: flex-start; color: #a4a4a4; font-size: 17.500px; letter-spacing: .3px; font-family: Roboto, sans-serif; gap: 11px; }
.ptab svg { height: 40px; }
.ptab-on { color: #3b82f6; }
.homebar { width: 248px; height: 8px; border-radius: 4px; background: #000; }
.info { position: absolute; left: 1727px; top: 1635px; }
```
